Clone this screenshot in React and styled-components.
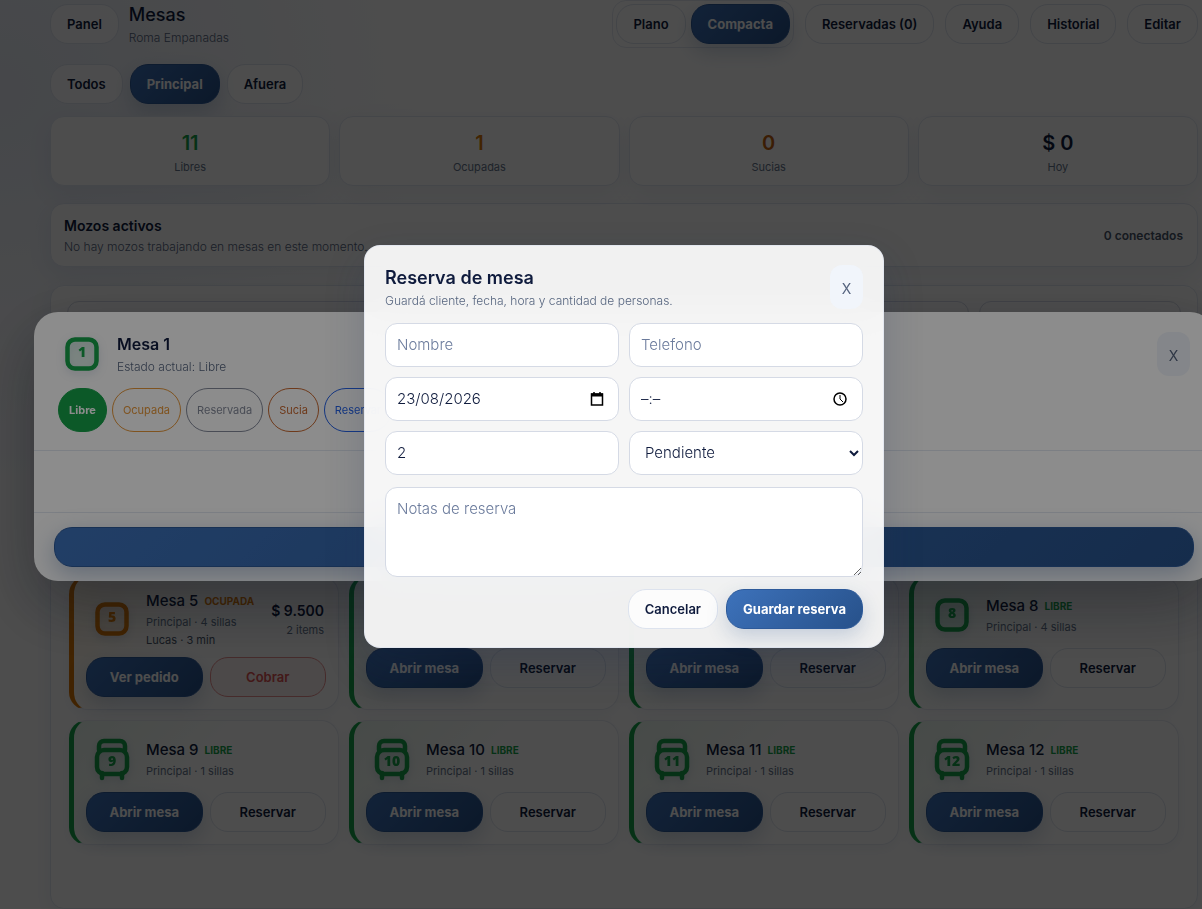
import React from 'react';
import styled, { createGlobalStyle, css } from 'styled-components';

const GlobalStyle = createGlobalStyle`
  * {
    box-sizing: border-box;
  }
  body {
    margin: 0;
    overflow: hidden;
    color: #0f1b3d;
    background: radial-gradient(circle at 0 10%, #e6ebf5 0, #ffffff 420px) #ffffff;
    font-family: Inter, "Noto Sans", sans-serif;
  }
  button, input, select, textarea {
    font-family: inherit;
    margin: 0;
  }
  h1, h2, h3, p {
    margin: 0;
  }
`

const Page = styled.main`
  padding: 0 4px 0 50px;
`
const Header = styled.header`
  display: flex;
  align-items: center;
  gap: 10px;
  height: 48px;
`
const HeaderActions = styled.nav`
  display: flex;
  align-items: center;
  gap: 11px;
  margin-left: auto;
`
const Segment = styled.div`
  display: flex;
  gap: 5px;
  padding: 3px;
  border: 1px solid #e4e9f2;
  border-radius: 14px;
`
const Heading = styled.div`
  padding-top: 2px;
`
const Title = styled.h1`
  font-size: 18px;
  line-height: 24px;
  font-weight: 500;
`
const Subtitle = styled.p`
  margin-top: 1px;
  font-size: 12px;
  line-height: 20px;
  font-weight: 300;
  color: #56657f;
`
const Button = styled.button`
  height: 40px;
  padding: 0 16px;
  border: 1px solid #dde3ee;
  border-radius: 18px;
  background: rgba(255, 255, 255, .8);
  color: #0f1b3d;
  font-size: 13px;
  font-weight: 600;
  white-space: nowrap;

  ${props => props.$variant === 'primary' && css`
    color: #ffffff;
    font-weight: 700;
    border-color: #2d5a9a;
    background: linear-gradient(135deg, #3d72bb, #27518a);
    box-shadow: 0 8px 20px rgba(39, 81, 138, .22);
  `}
  ${props => props.$variant === 'danger' && css`
    color: #dc5252;
    border-color: #e88f8f;
    background: #fbf0f0;
  `}
`
const Tabs = styled.div`
  display: flex;
  gap: 7px;
  margin-top: 16px;
`
const Stats = styled.section`
  display: grid;
  grid-template-columns: repeat(4, 1fr);
  gap: 9px;
  margin-top: 12px;
`
const Panel = styled.section`
  border: 1px solid #e2e8f2;
  border-radius: 14px;
  background: #ffffff;
  box-shadow: 0 8px 24px rgba(30, 60, 120, .08);
`
const Stat = styled(Panel)`
  height: 70px;
  padding-top: 12px;
  text-align: center;
`
const StatValue = styled.div`
  font-size: 20px;
  line-height: 28px;
  font-weight: 600;
  color: ${props => props.$color};
`
const StatLabel = styled.div`
  font-size: 11px;
  line-height: 20px;
  font-weight: 400;
  color: #64748b;
`
const Waiters = styled(Panel)`
  display: flex;
  align-items: center;
  justify-content: space-between;
  margin-top: 17px;
  height: 64px;
  padding: 0 14px 0 13px;
`
const WaitersTitle = styled.h2`
  font-size: 14px;
  line-height: 20px;
  font-weight: 600;
`
const Connected = styled.span`
  font-size: 12px;
  font-weight: 600;
  color: #475569;
`
const Board = styled(Panel)`
  min-height: 624px;
  margin-top: 18px;
  padding: 15px 16px 0;
`
const Filters = styled.div`
  display: grid;
  grid-template-columns: 1fr 202px;
  gap: 10px;
`
const Field = styled.input`
  width: 100%;
  height: 44px;
  padding: 0 11px 2px;
  border: 1px solid #d5dae5;
  border-radius: 12px;
  background: #ffffff;
  color: #0f1b3d;
  font-size: 15px;
  font-weight: 300;

  &::placeholder {
    color: #6b7b9c;
    opacity: 1;
  }
`
const Cards = styled.div`
  display: grid;
  grid-template-columns: repeat(4, 1fr);
  gap: 10px;
  margin-top: 231px;
  padding: 0 2px;
`
const Card = styled.article`
  padding: 12px;
  border: 1px solid #e6eaf2;
  border-left: 5px solid ${props => props.$color};
  border-radius: 18px;
  background: linear-gradient(135deg, ${props => props.$tint}, #ffffff 45%);
  box-shadow: 0 4px 14px rgba(30, 60, 120, .06);
`
const CardHead = styled.div`
  display: flex;
  align-items: center;
  gap: 8px;
  min-height: 51px;
`
const CardName = styled.h3`
  display: flex;
  align-items: center;
  gap: 6px;
  padding: 1px 0;
  font-size: 15px;
  line-height: 22px;
  font-weight: 500;
`
const Status = styled.span`
  font-size: 10px;
  font-weight: 700;
  color: ${props => props.$color};
`
const Meta = styled.p`
  font-size: 11px;
  line-height: 18px;
  font-weight: 400;
  color: ${props => (props.$strong ? '#475569' : '#64748b')};
`
const Total = styled.div`
  margin-left: auto;
  padding: 2px 2px 0 0;
  text-align: right;
`
const Amount = styled.div`
  font-size: 14px;
  line-height: 20px;
  font-weight: 600;
  white-space: nowrap;
`
const CardActions = styled.div`
  display: grid;
  grid-template-columns: 1fr 1fr;
  gap: 7px;
  margin-top: 8px;
`
const Icon = styled.svg`
  display: block;
  flex: none;
  width: 52px;
  height: 50px;
  filter: drop-shadow(0 3px 4px rgba(30, 60, 120, .18));

  text {
    font-family: "Noto Sans", sans-serif;
    font-size: 14px;
    font-weight: 900;
  }
`
const Backdrop = styled.div`
  position: fixed;
  inset: 0;
  display: flex;
  align-items: center;
  justify-content: center;
  padding: 0 0 16px 46px;
  background: rgba(0, 0, 0, .45);
`
const Sheet = styled.section`
  flex: none;
  width: 1180px;
  border-radius: 24px;
  background: #ffffff;
  box-shadow: 0 24px 64px rgba(15, 23, 42, .35);
  overflow: hidden;
`
const SheetHeader = styled.header`
  padding: 20px 24px 18px;
  border-bottom: 1px solid #e2e7f0;
`
const SheetTop = styled.div`
  display: flex;
  align-items: center;
  gap: 11px;
  height: 44px;
`
const IconBox = styled.div`
  display: flex;
  justify-content: center;
  width: 48px;
`
const DialogTitle = styled.h2`
  font-size: 18px;
  line-height: 24px;
  font-weight: 600;
`
const SheetTitle = styled.h2`
  font-size: 16px;
  line-height: 24px;
  font-weight: 600;
`
const Close = styled.button`
  width: 33px;
  height: 44px;
  margin-left: auto;
  padding: 3px 0 0;
  border: 0;
  border-radius: 12px;
  background: #f1f5fb;
  color: #56647f;
  font-size: 14px;
`
const Chips = styled.div`
  display: flex;
  gap: 5px;
  margin-top: 12px;
`
const Chip = styled.button`
  height: 44px;
  padding: 0 10px;
  border: 1px solid ${props => props.$color};
  border-radius: 22px;
  background: ${props => (props.$active ? props.$color : 'transparent')};
  color: ${props => (props.$active ? '#ffffff' : props.$color)};
  font-size: 11px;
  font-weight: ${props => (props.$active ? 700 : 400)};
`
const SheetBody = styled.div`
  height: 61px;
`
const SheetFooter = styled.footer`
  display: grid;
  padding: 14px 20px;
  border-top: 1px solid #e2e7f0;

  button {
    box-shadow: 0 8px 24px rgba(39, 81, 138, .35);
  }
`
const Dialog = styled.form`
  width: 520px;
  padding: 19px 20px 18px;
  border: 1px solid rgba(226, 231, 240, .9);
  border-radius: 16px;
  background: rgba(255, 255, 255, .92);
  backdrop-filter: blur(18px);
  box-shadow: 0 16px 40px rgba(30, 50, 90, .2);
`
const DialogTop = styled.div`
  display: flex;
  align-items: center;
  height: 44px;
`
const Fields = styled.div`
  display: grid;
  grid-template-columns: 1fr 1fr;
  gap: 10px;
  margin: 14px 0 12px;
`
const FieldLabel = styled.label`
  position: relative;
  display: block;
`
const FieldIcon = styled.svg`
  position: absolute;
  right: 14px;
  top: 14px;
  width: 16px;
  height: 16px;
  fill: none;
  stroke: #000000;
  stroke-width: 1.5;
`
const Select = styled(Field)`
  padding: 0 0 2px 11px;
`
const Notes = styled(Field)`
  display: block;
  height: 90px;
  padding: 11px;
  resize: vertical;
`
const DialogActions = styled.div`
  display: flex;
  justify-content: flex-end;
  gap: 8px;
  margin-top: 12px;
`

const GREEN = '#16a34a'
const ORANGE = '#d97706'

const tables = [
  { number: 5, status: 'Ocupada', seats: 4, waiter: 'Lucas · 3 min', total: '$ 9.500', items: '2 items' },
  { number: 6, status: 'Libre' },
  { number: 7, status: 'Libre' },
  { number: 8, status: 'Libre', seats: 4 },
  { number: 9, status: 'Libre', seats: 1 },
  { number: 10, status: 'Libre', seats: 1 },
  { number: 11, status: 'Libre', seats: 1 },
  { number: 12, status: 'Libre', seats: 1 },
]

const stats = [
  { value: '11', label: 'Libres', color: GREEN },
  { value: '1', label: 'Ocupadas', color: ORANGE },
  { value: '0', label: 'Sucias', color: '#c2620f' },
  { value: '$ 0', label: 'Hoy', color: '#0f1b3d' },
]

const TableIcon = ({ number, color, stool }) => (
  <Icon viewBox="0 0 52 50" aria-hidden="true">
    <g fill="none" stroke={color} strokeWidth="4.5" strokeLinecap="round">
      {stool ? (
        <>
          <path d="M13 16v-4a5 5 0 0 1 5-5h16a5 5 0 0 1 5 5v4" />
          <rect x="11" y="16" width="30" height="24" rx="7" fill={color} fillOpacity=".06" />
          <path d="M16 39v5M36 39v5" />
        </>
      ) : (
        <rect x="11.5" y="10.5" width="29" height="29" rx="7.5" fill={color} fillOpacity=".1" />
      )}
    </g>
    <text x="26" y={stool ? 32 : 28} textAnchor="middle" fill={color}>{number}</text>
  </Icon>
)

const TableCard = ({ table }) => {
  const busy = table.status === 'Ocupada'
  const color = busy ? ORANGE : GREEN
  return (
    <Card $color={color} $tint={busy ? '#fdf3e0' : '#eaf7ee'}>
      <CardHead>
        {table.seats && (
          <>
            <TableIcon number={table.number} color={color} stool={table.seats === 1} />
            <div>
              <CardName>
                Mesa {table.number}
                <Status $color={color}>{table.status.toUpperCase()}</Status>
              </CardName>
              <Meta>Principal · {table.seats} sillas</Meta>
              {table.waiter && <Meta $strong>{table.waiter}</Meta>}
            </div>
          </>
        )}
        {table.total && (
          <Total>
            <Amount>{table.total}</Amount>
            <Meta>{table.items}</Meta>
          </Total>
        )}
      </CardHead>
      <CardActions>
        <Button type="button" $variant="primary">{busy ? 'Ver pedido' : 'Abrir mesa'}</Button>
        <Button type="button" $variant={busy ? 'danger' : undefined}>{busy ? 'Cobrar' : 'Reservar'}</Button>
      </CardActions>
    </Card>
  )
}

const TableSheet = () => (
  <Backdrop>
    <Sheet>
      <SheetHeader>
        <SheetTop>
          <IconBox>
            <TableIcon number={1} color={GREEN} />
          </IconBox>
          <div>
            <SheetTitle>Mesa 1</SheetTitle>
            <Subtitle>Estado actual: Libre</Subtitle>
          </div>
          <Close type="button">X</Close>
        </SheetTop>
        <Chips>
          <Chip $active $color={GREEN}>Libre</Chip>
          <Chip $color="#e8983a">Ocupada</Chip>
          <Chip $color="#858b9b">Reservada</Chip>
          <Chip $color="#c96a32">Sucia</Chip>
          <Chip $color="#2563eb">Reservar</Chip>
        </Chips>
      </SheetHeader>
      <SheetBody />
      <SheetFooter>
        <Button type="button" $variant="primary" />
      </SheetFooter>
    </Sheet>
  </Backdrop>
)

const ReservationDialog = () => (
  <Backdrop>
    <Dialog onSubmit={(e) => e.preventDefault()}>
      <DialogTop>
        <Heading>
          <DialogTitle>Reserva de mesa</DialogTitle>
          <Subtitle>Guardá cliente, fecha, hora y cantidad de personas.</Subtitle>
        </Heading>
        <Close type="button">X</Close>
      </DialogTop>
      <Fields>
        <Field placeholder="Nombre" aria-label="Nombre" />
        <Field placeholder="Telefono" aria-label="Telefono" type="tel" />
        <FieldLabel>
          <Field defaultValue="23/08/2026" aria-label="Fecha" />
          <FieldIcon viewBox="0 0 16 16">
            <path d="M2.5 3h11v11h-11z" />
            <path d="M2 4h12" strokeWidth="3" />
            <path d="M5 1v2M11 1v2" />
          </FieldIcon>
        </FieldLabel>
        <FieldLabel>
          <Field defaultValue="–:–" aria-label="Hora" />
          <FieldIcon viewBox="0 0 16 16">
            <circle cx="7" cy="8" r="6" />
            <path d="M7 4v4l3 3" strokeWidth="1" />
          </FieldIcon>
        </FieldLabel>
        <Field type="number" defaultValue="2" aria-label="Personas" />
        <Select as="select" aria-label="Estado">
          <option>Pendiente</option>
        </Select>
      </Fields>
      <Notes as="textarea" placeholder="Notas de reserva" aria-label="Notas de reserva" />
      <DialogActions>
        <Button type="button">Cancelar</Button>
        <Button type="submit" $variant="primary">Guardar reserva</Button>
      </DialogActions>
    </Dialog>
  </Backdrop>
)

const App = () => {
  return (
    <>
      <GlobalStyle />
      <Page>
        <Header>
          <Button type="button">Panel</Button>
          <Heading>
            <Title>Mesas</Title>
            <Subtitle>Roma Empanadas</Subtitle>
          </Heading>
          <HeaderActions>
            <Segment>
              <Button type="button">Plano</Button>
              <Button type="button" $variant="primary">Compacta</Button>
            </Segment>
            <Button type="button">Reservadas (0)</Button>
            <Button type="button">Ayuda</Button>
            <Button type="button">Historial</Button>
            <Button type="button">Editar</Button>
          </HeaderActions>
        </Header>
        <Tabs>
          <Button type="button">Todos</Button>
          <Button type="button" $variant="primary">Principal</Button>
          <Button type="button">Afuera</Button>
        </Tabs>
        <Stats>
          {stats.map((v) => (
            <Stat as="div" key={v.label}>
              <StatValue $color={v.color}>{v.value}</StatValue>
              <StatLabel>{v.label}</StatLabel>
            </Stat>
          ))}
        </Stats>
        <Waiters>
          <Heading>
            <WaitersTitle>Mozos activos</WaitersTitle>
            <Subtitle>No hay mozos trabajando en mesas en este momento.</Subtitle>
          </Heading>
          <Connected>0 conectados</Connected>
        </Waiters>
        <Board>
          <Filters>
            <Field aria-label="Buscar" />
            <Field aria-label="Filtro" />
          </Filters>
          <Cards>
            {tables.map((v) => (
              <TableCard key={v.number} table={v} />
            ))}
          </Cards>
        </Board>
      </Page>
      <TableSheet />
      <ReservationDialog />
    </>
  )
}

export default App
